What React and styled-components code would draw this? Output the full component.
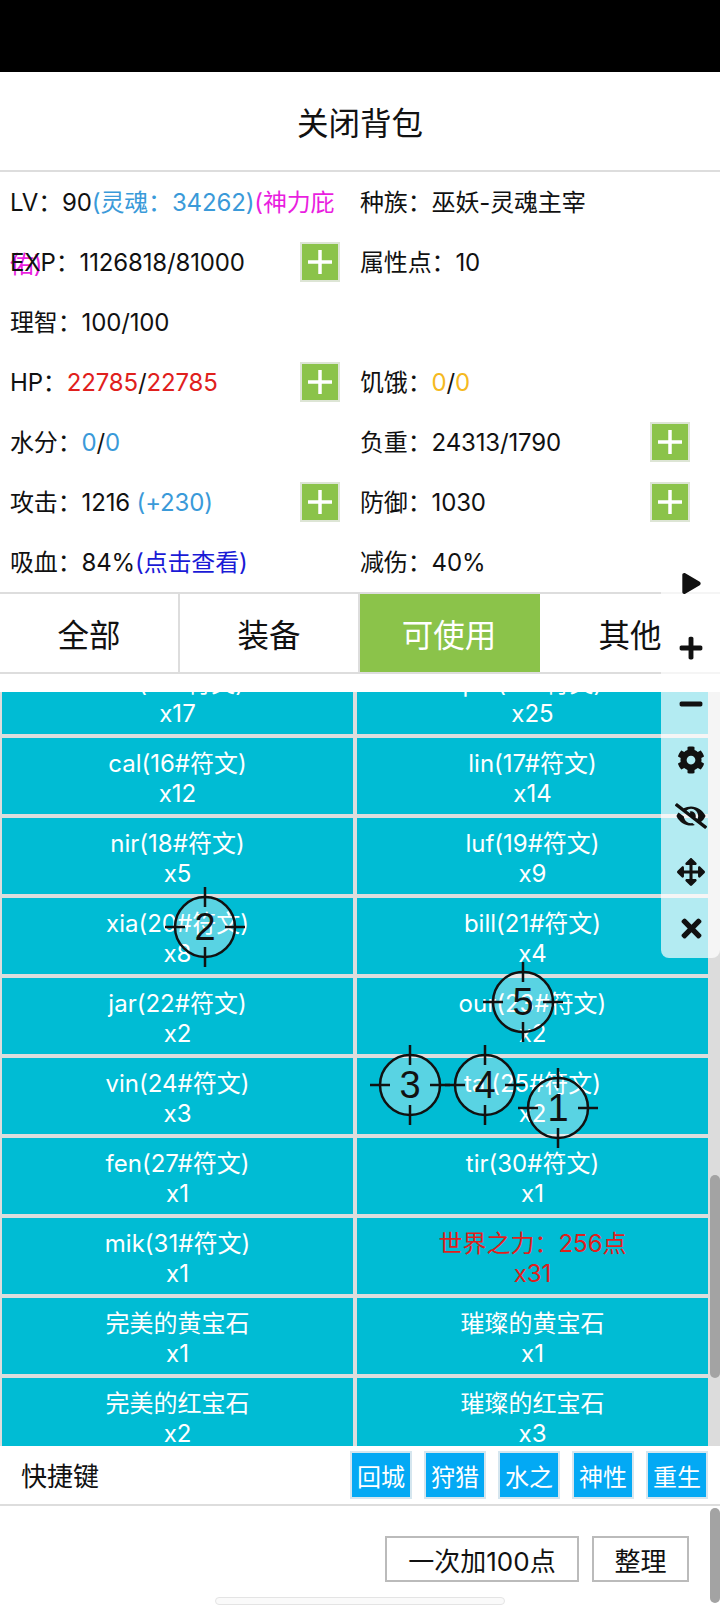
import React from 'react';
import styled, { createGlobalStyle } from 'styled-components';
import { FaPlay, FaPlus, FaMinus, FaCog, FaEyeSlash, FaArrowsAlt, FaTimes } from 'react-icons/fa';

const Global = createGlobalStyle`
  html, body { margin: 0; padding: 0; background: #fff; }
  body {
    font-family: Inter, "Noto Sans CJK SC", sans-serif;
    color: #111;
  }
  * { box-sizing: border-box; }
`;

const Page = styled.div`
  position: relative;
  width: 720px;
  height: 1605px;
  overflow: hidden;
  background: #fff;
`;

const StatusBar = styled.div`
  height: 72px;
  background: #000;
`;

const Title = styled.div`
  height: 100px;
  border-bottom: 2px solid #ddd;
  display: flex;
  align-items: center;
  justify-content: center;
  font-size: 31.5px;
`;

const Stats = styled.div`
  display: flex;
  flex-wrap: wrap;
  width: 720px;
  height: 420px;
`;

const Stat = styled.div`
  display: flex;
  justify-content: space-between;
  align-items: flex-start;
  width: 350px;
  height: 60px;
  padding: 0 10px;
  font-size: 24px;
  line-height: 62px;
  letter-spacing: -0.15px;
  & + &:nth-child(even) { margin-right: 20px; }
`;

const StatText = styled.div`
  flex: 1;
  min-width: 0;
`;

const Tone = styled.span`
  color: ${(p) => p.$c};
`;

const PlusBtn = styled.div`
  flex: none;
  width: 40px;
  height: 40px;
  margin-top: 10px;
  background: #8bc34a;
  border: 2px solid #dde5d5;
  display: flex;
  align-items: center;
  justify-content: center;
`;

const Tabs = styled.div`
  display: flex;
  height: 82px;
  border-top: 2px solid #ddd;
  border-bottom: 2px solid #ddd;
`;

const Tab = styled.div`
  width: 180px;
  display: flex;
  align-items: center;
  justify-content: center;
  font-size: 31.5px;
  border-right: 2px solid ${(p) => (p.$active ? '#8bc34a' : '#ddd')};
  background: ${(p) => (p.$active ? '#8bc34a' : 'transparent')};
  color: ${(p) => (p.$active ? '#fff' : '#111')};
  &:last-child { border-right: 0; }
`;

const ListArea = styled.div`
  position: relative;
  height: 754px;
  margin-top: 18px;
  overflow: hidden;
  background: #dcdcdc;
`;

const Grid = styled.div`
  display: grid;
  grid-template-columns: 355px 355px;
  margin-top: -36px;
  width: 710px;
`;

const Cell = styled.div`
  height: 80px;
  border: 2px solid #ddd;
  background: #00bcd4;
  color: ${(p) => (p.$hot ? '#e0201c' : '#fff')};
  text-align: center;
  font-size: 24px;
  line-height: 30px;
  padding-top: 11px;
`;

const Thumb = styled.div`
  position: absolute;
  right: 0;
  top: ${(p) => p.$top}px;
  width: 10px;
  height: ${(p) => p.$h}px;
  border-radius: 5px;
  background: #a3a3a3;
`;

const Shortcuts = styled.div`
  display: flex;
  align-items: center;
  height: 60px;
  border-bottom: 2px solid #ddd;
  padding: 0 12px 0 21px;
  gap: 12px;
`;

const ShortcutLabel = styled.div`
  flex: 1;
  font-size: 26px;
  margin-top: -2px;
`;

const ShortcutBtn = styled.div`
  width: 62px;
  height: 48px;
  background: #03a9f4;
  border: 2px solid #d5e6ef;
  color: #fff;
  font-size: 24px;
  display: flex;
  align-items: center;
  justify-content: center;
`;

const Footer = styled.div`
  display: flex;
  justify-content: flex-end;
  gap: 13px;
  padding: 30px 31px 0 0;
`;

const OutlineBtn = styled.div`
  height: 46px;
  width: ${(p) => p.$w}px;
  border: 2px solid #bbb;
  font-size: 26px;
  display: flex;
  align-items: center;
  justify-content: center;
`;

const HomeBar = styled.div`
  position: absolute;
  left: 215px;
  bottom: 0;
  width: 290px;
  height: 8px;
  border: 1px solid #e4e4e4;
  border-radius: 4px;
  background: #fafafa;
`;

const FloatPanel = styled.div`
  position: absolute;
  left: 661px;
  top: 553px;
  width: 59px;
  height: 405px;
  border-radius: 8px;
  background: rgba(255, 255, 255, 0.7);
  display: flex;
  flex-direction: column;
  padding: 2px 0 0 1px;
  color: #111;
`;

const FloatIcon = styled.div`
  height: 56px;
  flex: none;
  margin-bottom: ${(p) => p.$after || 0}px;
  display: flex;
  align-items: center;
  justify-content: center;
`;

const Target = styled.div`
  position: absolute;
  left: ${(p) => p.$x - 40}px;
  top: ${(p) => p.$y - 40}px;
  width: 80px;
  height: 80px;
`;

const TargetNum = styled.span`
  position: absolute;
  inset: 0;
  display: flex;
  align-items: center;
  justify-content: center;
  font-family: "Liberation Sans", sans-serif;
  font-size: 38px;
  color: #111;
`;

const Plus = () => (
  <PlusBtn>
    <svg width="32" height="32" viewBox="0 0 32 32">
      <path d="M16 4v24M4 16h24" stroke="#fff" strokeWidth="3.5" />
    </svg>
  </PlusBtn>
);

const Crosshair = ({ x, y, n }) => (
  <Target $x={x} $y={y}>
    <svg width="80" height="80" viewBox="0 0 80 80">
      <circle cx="40" cy="40" r="30" fill="rgba(255,255,255,0.35)" stroke="#111" strokeWidth="2.5" />
      <path d="M40 0v20M40 60v20M0 40h20M60 40h20" stroke="#111" strokeWidth="2.5" />
    </svg>
    <TargetNum>{n}</TargetNum>
  </Target>
);

const items = [
  ['tal(14#符文)', 'x17'], ['pul(15#符文)', 'x25'],
  ['cal(16#符文)', 'x12'], ['lin(17#符文)', 'x14'],
  ['nir(18#符文)', 'x5'], ['luf(19#符文)', 'x9'],
  ['xia(20#符文)', 'x8'], ['bill(21#符文)', 'x4'],
  ['jar(22#符文)', 'x2'], ['our(23#符文)', 'x2'],
  ['vin(24#符文)', 'x3'], ['tal(25#符文)', 'x2'],
  ['fen(27#符文)', 'x1'], ['tir(30#符文)', 'x1'],
  ['mik(31#符文)', 'x1'], ['世界之力：256点', 'x31', true],
  ['完美的黄宝石', 'x1'], ['璀璨的黄宝石', 'x1'],
  ['完美的红宝石', 'x2'], ['璀璨的红宝石', 'x3'],
];

export default function App() {
  return (
    <Page>
      <Global />
      <StatusBar />
      <Title>关闭背包</Title>
      <Stats>
        <Stat>
          <StatText>
            LV：90<Tone $c="#3a9ad9">(灵魂：34262)</Tone>
            <Tone $c="#e91ee0">(神力庇佑)</Tone>
          </StatText>
        </Stat>
        <Stat><StatText>种族：巫妖-灵魂主宰</StatText></Stat>
        <Stat><StatText>EXP：1126818/81000</StatText><Plus /></Stat>
        <Stat><StatText>属性点：10</StatText></Stat>
        <Stat><StatText>理智：100/100</StatText></Stat>
        <Stat />
        <Stat>
          <StatText>
            HP：<Tone $c="#e0201c">22785</Tone>/<Tone $c="#e0201c">22785</Tone>
          </StatText>
          <Plus />
        </Stat>
        <Stat>
          <StatText>
            饥饿：<Tone $c="#f5b921">0</Tone>/<Tone $c="#f5b921">0</Tone>
          </StatText>
        </Stat>
        <Stat>
          <StatText>
            水分：<Tone $c="#3a9ad9">0</Tone>/<Tone $c="#3a9ad9">0</Tone>
          </StatText>
        </Stat>
        <Stat><StatText>负重：24313/1790</StatText><Plus /></Stat>
        <Stat>
          <StatText>攻击：1216 <Tone $c="#3a9ad9">(+230)</Tone></StatText>
          <Plus />
        </Stat>
        <Stat><StatText>防御：1030</StatText><Plus /></Stat>
        <Stat>
          <StatText>吸血：84%<Tone $c="#1a1ad6">(点击查看)</Tone></StatText>
        </Stat>
        <Stat><StatText>减伤：40%</StatText></Stat>
      </Stats>
      <Tabs>
        <Tab>全部</Tab>
        <Tab>装备</Tab>
        <Tab $active>可使用</Tab>
        <Tab>其他</Tab>
      </Tabs>
      <ListArea>
        <Grid>
          {items.map(([name, count, hot]) => (
            <Cell key={name} $hot={hot}>
              {name}
              <br />
              {count}
            </Cell>
          ))}
        </Grid>
        <Thumb $top={483} $h={203} />
      </ListArea>
      <Shortcuts>
        <ShortcutLabel>快捷键</ShortcutLabel>
        <ShortcutBtn>回城</ShortcutBtn>
        <ShortcutBtn>狩猎</ShortcutBtn>
        <ShortcutBtn>水之</ShortcutBtn>
        <ShortcutBtn>神性</ShortcutBtn>
        <ShortcutBtn>重生</ShortcutBtn>
      </Shortcuts>
      <Footer>
        <OutlineBtn $w={194}>一次加100点</OutlineBtn>
        <OutlineBtn $w={97}>整理</OutlineBtn>
      </Footer>
      <Thumb $top={1508} $h={95} />
      <HomeBar />
      <FloatPanel>
        <FloatIcon $after={9}><FaPlay size={21} /></FloatIcon>
        <FloatIcon><FaPlus size={26} /></FloatIcon>
        <FloatIcon><FaMinus size={26} /></FloatIcon>
        <FloatIcon><FaCog size={28} /></FloatIcon>
        <FloatIcon><FaEyeSlash size={32} /></FloatIcon>
        <FloatIcon><FaArrowsAlt size={28} /></FloatIcon>
        <FloatIcon><FaTimes size={29} /></FloatIcon>
      </FloatPanel>
      <Crosshair x={205} y={927} n={2} />
      <Crosshair x={523} y={1002} n={5} />
      <Crosshair x={410} y={1085} n={3} />
      <Crosshair x={485} y={1085} n={4} />
      <Crosshair x={558} y={1108} n={1} />
    </Page>
  );
}
